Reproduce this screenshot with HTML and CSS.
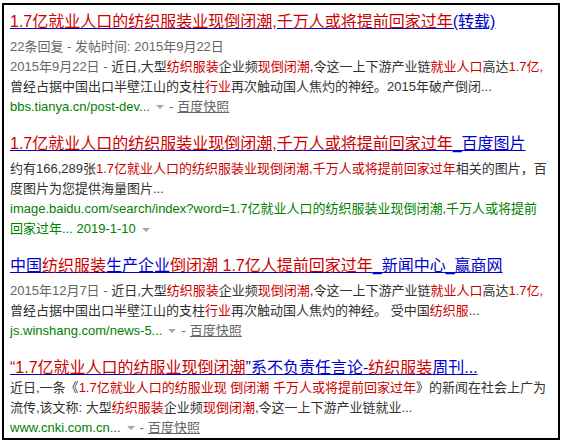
FILE: index.html
```html
<!DOCTYPE html>
<html lang="zh-CN">
<head>
<meta charset="utf-8">
<title>搜索结果</title>
<link rel="stylesheet" href="styles.css">
</head>
<body>
<div class="box">
  <div class="result">
    <h3 class="title"><a href="#"><em>1.7亿就业人口的纺织服装业现倒闭潮,千万人或将提前回家过年</em>(转载)</a></h3>
    <div class="abs">
      <span class="meta">22条回复 - 发帖时间: 2015年9月22日</span><br>
      <span class="meta">2015年9月22日 - </span>近日,大型<em>纺织服装</em>企业频<em>现倒闭潮</em>,令这一上下游产业链<em>就业人口</em>高达<em>1.7亿,</em><br>
      曾经占据中国出口半壁江山的支柱<em>行业</em>再次触动国人焦灼的神经。2015年破产倒闭...
    </div>
    <div class="url"><span class="green">bbs.tianya.cn/post-dev...</span><span class="arrow"></span><span class="sep">-</span><a class="snap" href="#">百度快照</a></div>
  </div>

  <div class="result">
    <h3 class="title"><a href="#"><em>1.7亿就业人口的纺织服装业现倒闭潮,千万人或将提前回家过年</em>_百度图片</a></h3>
    <div class="abs">
      约有166,289张<em>1.7亿就业人口的纺织服装业现倒闭潮,千万人或将提前回家过年</em>相关的图片，百<br>
      度图片为您提供海量图片...
    </div>
    <div class="url green">image.baidu.com/search/index?word=1.7亿就业人口的纺织服装业现倒闭潮,千万人或将提前<br>回家过年... 2019-1-10<span class="arrow"></span></div>
  </div>

  <div class="result">
    <h3 class="title"><a href="#">中国<em>纺织服装</em>生产企业<em>倒闭潮 1.7亿人提前回家过年</em>_新闻中心_赢商网</a></h3>
    <div class="abs">
      <span class="meta">2015年12月7日 - </span>近日,大型<em>纺织服装</em>企业频<em>现倒闭潮</em>,令这一上下游产业链<em>就业人口</em>高达<em>1.7亿,</em><br>
      曾经占据中国出口半壁江山的支柱<em>行业</em>再次触动国人焦灼的神经。 受中国<em>纺织服</em>...
    </div>
    <div class="url"><span class="green">js.winshang.com/news-5...</span><span class="arrow"></span><span class="sep">-</span><a class="snap" href="#">百度快照</a></div>
  </div>

  <div class="result last">
    <h3 class="title"><a href="#"><em>“1.7亿就业人口的纺服业现倒闭潮</em>”系不负责任言论-<em>纺织服装</em>周刊...</a></h3>
    <div class="abs">
      近日,一条《<em>1.7亿就业人口的纺服业现 倒闭潮 千万人或将提前回家过年</em>》的新闻在社会上广为<br>
      流传,该文称: 大型<em>纺织服装</em>企业频<em>现倒闭潮</em>,令这一上下游产业链就业...
    </div>
    <div class="url"><span class="green">www.cnki.com.cn...</span><span class="arrow"></span><span class="sep">-</span><a class="snap" href="#">百度快照</a></div>
  </div>
</div>
</body>
</html>
```
FILE: styles.css
```css
html, body {
  margin: 0;
  padding: 0;
  background: #fff;
}
body {
  font-family: "Liberation Sans", "Noto Sans CJK SC", sans-serif;
  font-size: 13px;
  color: #333;
}
.box {
  box-sizing: border-box;
  width: 558px;
  height: 437px;
  margin: 3px 0 0 2px;
  border: 2px solid #000;
  padding: 6px 6px 0 6px;
  display: flex;
  flex-direction: column;
  gap: 16px;
  overflow: hidden;
}
.result {
  display: flex;
  flex-direction: column;
}
.title {
  margin: 0 0 4px 0;
  font-size: 16px;
  font-weight: normal;
  line-height: 22px;
  white-space: nowrap;
}
.last .title {
  margin-bottom: -1px;
}
.title a {
  color: #00c;
  text-decoration: underline;
}
em {
  font-style: normal;
  color: #c00;
}
.abs {
  line-height: 20px;
  white-space: nowrap;
}
.meta {
  color: #666;
}
.url {
  line-height: 20px;
  white-space: nowrap;
  display: flex;
  align-items: center;
}
.url.green {
  display: block;
}
.green {
  color: #008000;
}
.arrow {
  display: inline-block;
  width: 0;
  height: 0;
  border-left: 4px solid transparent;
  border-right: 4px solid transparent;
  border-top: 4px solid #9ab09a;
  margin: 0 0 0 6px;
  vertical-align: middle;
}
.sep {
  color: #666;
  margin: 0 4px 0 5px;
}
.snap {
  color: #666;
  text-decoration: underline;
}
```
